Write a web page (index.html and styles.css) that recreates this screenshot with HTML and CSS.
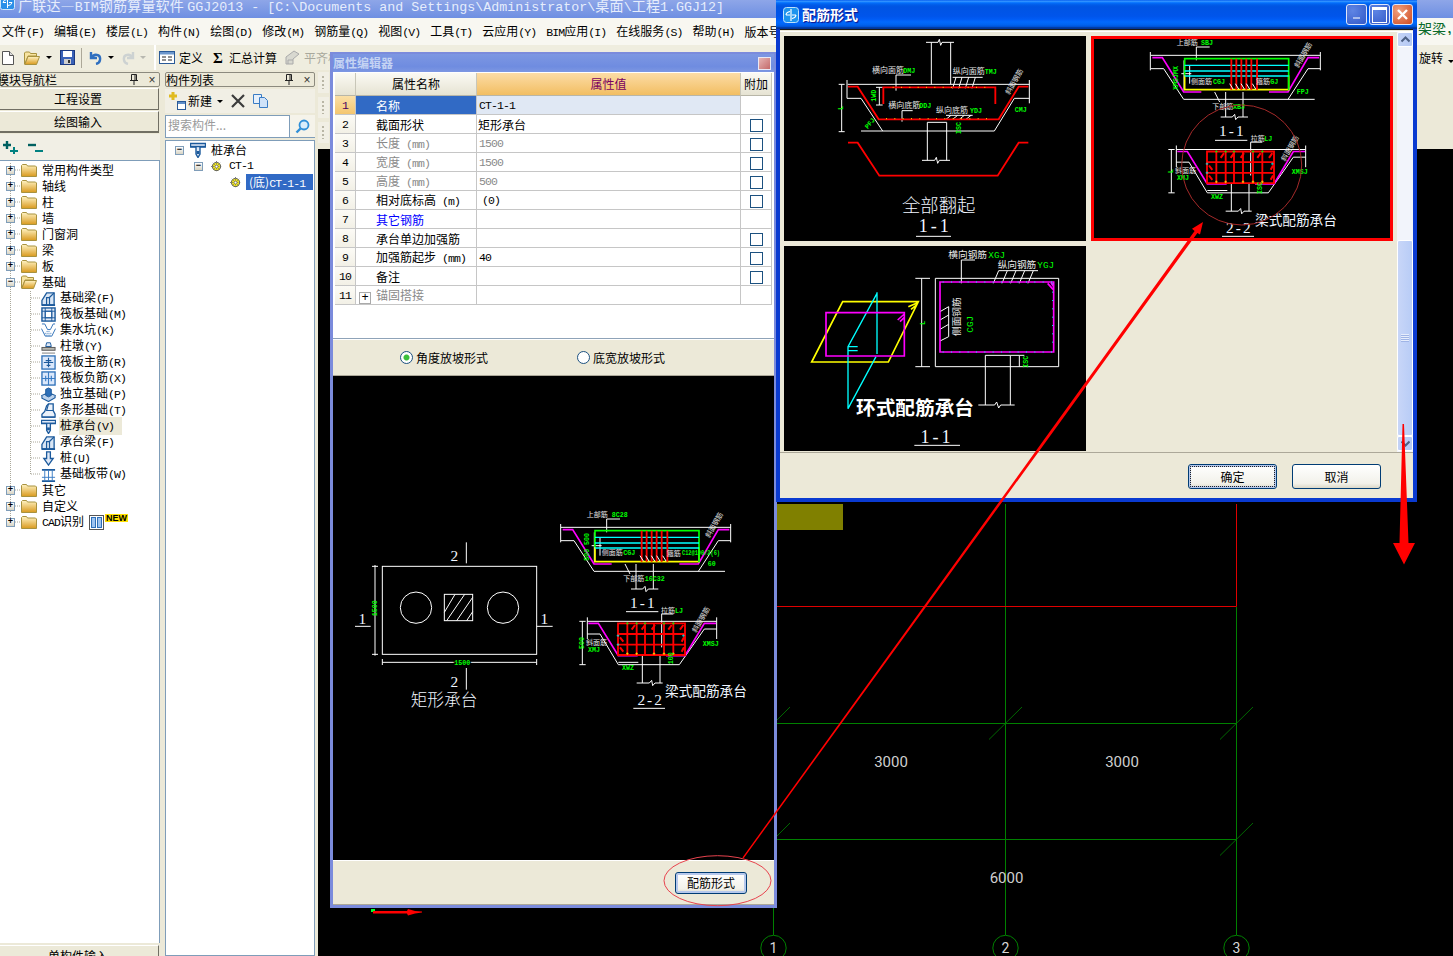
FILE: index.html
```html
<!DOCTYPE html>
<html lang="zh-CN">
<head>
<meta charset="utf-8">
<title>广联达 BIM 钢筋算量软件</title>
<link rel="stylesheet" href="styles.css">
</head>
<body>
<svg class="defs" width="0" height="0" aria-hidden="true">
  <defs>
    <linearGradient id="fold" x1="0" y1="0" x2="0" y2="1"><stop offset="0" stop-color="#fff3c4"/><stop offset="1" stop-color="#d99a1e"/></linearGradient>
    <symbol id="i-folder" viewBox="0 0 16 14"><path d="M.5 13.5V2.5l1-1h4l1 1.5h8l1 1v9.5z" fill="url(#fold)" stroke="#a8923f"/></symbol>
    <symbol id="i-open" viewBox="0 0 16 14"><path d="M.5 13V2l1-1h4l1 1.5h6V5H4L.8 13z" fill="#f7e3a0" stroke="#a8923f"/><path d="M.8 13.5 4 5.5h11.5L12.5 13.5z" fill="url(#fold)" stroke="#a8923f"/></symbol>
    <symbol id="i-beam" viewBox="0 0 16 16"><path d="M1 15V10L6 2h8v13z" fill="#d9e6f5" stroke="#1c5a9c" stroke-width="1.4"/><path d="M6 15V7h3v8M9 7l5-5" fill="#fff" stroke="#1c5a9c" stroke-width="1.4"/><path d="M1 15h14" stroke="#1c5a9c" stroke-width="2"/></symbol>
    <symbol id="i-raft" viewBox="0 0 16 16"><rect x="1" y="1" width="14" height="14" fill="#dfe9f7" stroke="#1c5a9c" stroke-width="1.5"/><rect x="4.500" y="4.500" width="7" height="7" fill="#fff" stroke="#1c5a9c"/><path d="M1 4.500h14M1 11.500h14M4.500 1v14M11.500 1v14" stroke="#1c5a9c"/></symbol>
    <symbol id="i-pit" viewBox="0 0 16 16"><path d="M1 1h3l3 6h3l3-6h2M.5 6l4 8h7l4-8" fill="#fff" stroke="#2d6fb8"/><path d="M4 11h8M5 13h6M6 9h4" stroke="#2d6fb8" stroke-dasharray="1 1"/></symbol>
    <symbol id="i-pier" viewBox="0 0 16 16"><path d="M6 4h4l1 4H5z" fill="#dfe9f7" stroke="#1c5a9c"/><rect x="1" y="9" width="14" height="3" fill="#b8b8b0" stroke="#555"/><path d="M1 15h14" stroke="#777"/></symbol>
    <symbol id="i-main" viewBox="0 0 16 16"><rect x="1" y="1" width="14" height="14" fill="#dbe8fb" stroke="#2d6fb8" stroke-width="1.4"/><path d="M8 3v10M3 8h10M5 6h6M6 11h4" stroke="#1c5a9c" stroke-width="1.200"/></symbol>
    <symbol id="i-neg" viewBox="0 0 16 16"><rect x="1" y="1" width="14" height="14" fill="#dbe8fb" stroke="#2d6fb8" stroke-width="1.4"/><path d="M8 1v14M1 8h14M5 5v6M11 5v6" stroke="#3a7cc4" stroke-width="1.200"/></symbol>
    <symbol id="i-iso" viewBox="0 0 16 16"><path d="M1 9l7-3 7 3-7 4z" fill="#e8f0fa" stroke="#1c5a9c" stroke-width="1.200"/><path d="M1 9v3l7 3.500 7-4V9" fill="#bcd2ec" stroke="#1c5a9c" stroke-width="1.200"/><path d="M5 2.500 8 1l3 1.500V9L8 10.500 5 9z" fill="#2d6fb8" stroke="#1c5a9c"/></symbol>
    <symbol id="i-strip" viewBox="0 0 16 16"><path d="M1 15v-3l3-3 2-6 2-2h5v7l2 4v3z" fill="#eaf1fa" stroke="#1c5a9c" stroke-width="1.400"/><path d="M1 15h14M8 1 6 8h7" stroke="#1c5a9c" fill="none" stroke-width="1.200"/></symbol>
    <symbol id="i-cap" viewBox="0 0 16 16"><path d="M.5 1.500h15v3.500H10v7L8 15.500 6 12V5H.5z" fill="#dfe9f7" stroke="#1c5a9c" stroke-width="1.400"/><path d="M1 4.500h14" stroke="#1c5a9c" stroke-width="1.400"/><path d="M6.500 9h3v3h-3z" fill="#1c5a9c"/></symbol>
    <symbol id="i-pile" viewBox="0 0 16 16"><path d="M6 1h4v7h3l-5 7-5-7h3z" fill="#dfe9f7" stroke="#1c5a9c" stroke-width="1.400"/></symbol>
    <symbol id="i-band" viewBox="0 0 16 16"><path d="M1 3h14M1 15h14" stroke="#1c5a9c" stroke-width="2"/><path d="M4 3v12M8 3v12M12 3v12M1 11h14" stroke="#3a7cc4"/></symbol>
    <symbol id="i-gear" viewBox="0 0 12 12"><circle cx="6" cy="6" r="4.500" fill="#f4ea1c" stroke="#555"/><path d="M6 0v12M0 6h12M2 2l8 8M10 2l-8 8" stroke="#666" stroke-dasharray="1 1"/><circle cx="6" cy="6" r="1.500" fill="#fff" stroke="#555" stroke-width=".6"/></symbol>
    <symbol id="i-pin" viewBox="0 0 8 11"><path d="M1.500.500h5v6h-5zM0 6.500h8M4 7v4M5 1v5" fill="none" stroke="#222"/></symbol>

    <g id="sec11" fill="none">
      <path class="w" d="M663 85H1172M662 75V130M1172 75V130M663 125H702L762 217H1155M1075 217L1135 125H1172M888 195V270M940 195V270M873 270H908L915 262 918 278 925 270H955M763 100V190M755 140H785M780 115V170M855 195 870 225M800 60V100M800 60H840"/>
      <path class="m" d="M668 92H698L762 195H815M1018 195H1075L1135 92H1168"/>
      <path class="y" d="M765 145V188H1077V145"/>
      <path class="g" d="M765 145V95H1077V190"/>
      <path class="c" d="M765 115H1077M765 132H1077M765 147H1077"/>
      <path class="r" d="M905 95V188M920 95V188M935 95V188M950 95V188M965 95V188M982 95V188"/>
      <path class="w" d="M900 170 910 186M917 170 927 186M934 170 944 186M950 170 960 186M968 170 978 186"/>
    </g>
    <g id="sec22" fill="none">
      <path class="w" d="M742 367H1130M742 355V420M1130 355V420M742 405H780L835 497H1018L1093 390H1130M907 470V552M960 470V552M890 552H928L935 544 938 560 945 552H968M965 345V445M965 345H1000M727 367V497M718 367H737M718 497H737M835 490H895"/>
      <path class="m" d="M745 373H775L835 470H893M978 470H1035L1093 373H1128"/>
      <path class="r" d="M834 373H1035V468H834ZM862 373V468M890 373V468M915 373V468M942 373V468M972 373V468M1000 373V468M834 405H1035M834 437H1035"/>
      <path class="rb" d="M875 392 885 378M905 392 915 378M935 392 945 378M985 392 995 378M1020 392 1030 378M840 415 850 428M840 445 850 458M1025 428 1032 415M1025 458 1032 445"/>
      <path class="g1" d="M858 373H866M862 369V377M886 373H894M890 369V377M911 373H919M915 369V377M968 373H976M972 369V377M996 373H1004M1000 369V377"/>
      <path class="y1" d="M858 464H866M862 460V468M886 464H894M890 460V468M938 464H946M942 460V468M968 464H976M972 460V468M996 464H1004M1000 460V468"/>
      <path class="c1" d="M830 410H838M834 406V414M830 437H838M834 433V441M1026 410H1034M1030 406V414"/>
    </g>
    <symbol id="i-min" viewBox="0 0 10 10"><rect x="1" y="7" width="7" height="2" fill="#a9bced"/></symbol>
  </defs>
</svg>

<div class="app">
  <header class="app-title">
    <svg class="app-logo" width="15" height="15" viewBox="0 0 15 15"><rect x=".5" y=".5" width="14" height="14" rx="2" fill="#2a8fe8" stroke="#cfe6fb"/><path d="M7.500 2v11M3 7.500a4 4 0 0 1 4-3M12 7.500a4 4 0 0 1-4 3M3 7.500h3M9 7.500h3" stroke="#fff" fill="none"/></svg>
    <span class="app-name">广联达—<span class="tl">BIM</span>钢筋算量软件 <span class="tl">GGJ2013 - [C:\Documents and Settings\Administrator\</span>桌面<span class="tl">\</span>工程<span class="tl">1.GGJ12]</span></span>
  </header>

  <nav class="menubar">
    <span>文件<i class="l">(F)</i></span><span>编辑<i class="l">(E)</i></span><span>楼层<i class="l">(L)</i></span><span>构件<i class="l">(N)</i></span><span>绘图<i class="l">(D)</i></span><span>修改<i class="l">(M)</i></span><span>钢筋量<i class="l">(Q)</i></span><span>视图<i class="l">(V)</i></span><span>工具<i class="l">(T)</i></span><span>云应用<i class="l">(Y)</i></span><span><i class="l">BIM</i>应用<i class="l">(I)</i></span><span>在线服务<i class="l">(S)</i></span><span>帮助<i class="l">(H)</i></span><span>版本号</span>
    <span class="menu-tail">架梁，</span>
  </nav>

  <div class="toolbar">
    <svg class="tb-a" width="12" height="14" viewBox="0 0 12 14"><path d="M.5.500h7l4 4v9H.500z" fill="#fff" stroke="#555"/><path d="M7.500.500v4h4" fill="#ddd" stroke="#555"/></svg>
    <svg class="tb-b" width="18" height="14" viewBox="0 0 16 14"><use href="#i-open"/></svg>
    <span class="caret"></span>
    <svg class="tb-c" width="15" height="15" viewBox="0 0 15 15"><rect x=".5" y=".5" width="14" height="14" fill="#3a62b8" stroke="#1d3a80"/><rect x="3" y="1" width="9" height="6" fill="#fff"/><rect x="4" y="9" width="7" height="5" fill="#cfcfcf"/><rect x="8" y="10" width="2" height="3" fill="#333"/></svg>
    <span class="tb-sep"></span>
    <svg class="tb-d" width="15" height="14" viewBox="0 0 15 14"><path d="M3 1v6h6M3 7c3-5 10-4 9 2-.3 2-2 3.500-4 4" fill="none" stroke="#2f6fc0" stroke-width="2.400"/></svg>
    <span class="caret"></span>
    <svg class="tb-e" width="13" height="14" viewBox="0 0 13 14"><path d="M11 1v6H5M11 7C8 2 1 3 2 9c.3 2 2 3.500 4 4" fill="none" stroke="#cdd2d2" stroke-width="2.400"/></svg>
    <span class="caret caret-off"></span>
    <span class="tb-break"></span>
    <svg class="tb-f" width="16" height="13" viewBox="0 0 16 13"><rect x=".5" y=".5" width="15" height="12" fill="#fff" stroke="#2a5a98"/><rect x="1" y="1" width="14" height="2.500" fill="#6d97cc"/><path d="M3 6h4M3 9h4M9 6h4M9 9h4" stroke="#222"/></svg>
    <span class="tb-txt">定义</span>
    <span class="tb-sigma">Σ</span>
    <span class="tb-txt">汇总计算</span>
    <svg class="tb-g" width="15" height="15" viewBox="0 0 15 15"><path d="M1 14V7l8-6 5 3-6 5v5z" fill="#d8d8d0" stroke="#aaa"/><path d="M3 14V10h5" stroke="#aaa" fill="none"/></svg>
    <span class="tb-txt tb-off">平齐板</span>
    <span class="tb-tail">旋转<span class="caret"></span></span>
  </div>

  <main class="main">
    <aside class="nav">
      <div class="pane-title"><span class="pane-name pane-clip">模块导航栏</span><svg class="pin"><use href="#i-pin"/></svg><span class="x">×</span></div>
      <button class="nav-btn">工程设置</button>
      <button class="nav-btn nav-btn2">绘图输入</button>
      <div class="nav-tools">
        <svg width="17" height="15" viewBox="0 0 17 15"><path d="M5 1v8M1 5h8" stroke="#006060" stroke-width="2.400" fill="none"/><path d="M12 7v7M8 11h8" stroke="#008080" stroke-width="2" fill="none"/></svg>
        <svg width="17" height="15" viewBox="0 0 17 15"><path d="M1 5h8" stroke="#006060" stroke-width="2.400" fill="none"/><path d="M8 11h8" stroke="#008080" stroke-width="2" fill="none"/></svg>
      </div>
      <div class="tree nav-tree">
        <svg class="guides" width="60" height="380" viewBox="0 0 60 380"><path d="M10.500 2V366M30.500 130V313M15 9h6M15 25h6M15 41h6M15 57h6M15 73h6M15 89h6M15 105h6M15 121h6M15 329h6M15 345h6M15 361h6M31 137h9M31 153h9M31 169h9M31 185h9M31 201h9M31 217h9M31 233h9M31 249h9M31 265h9M31 281h9M31 297h9M31 313h9" stroke="#aaa89a" stroke-dasharray="1 1" fill="none"/></svg>
        <div class="row"><b class="exp">+</b><svg class="fd"><use href="#i-folder"/></svg><span>常用构件类型</span></div>
        <div class="row"><b class="exp">+</b><svg class="fd"><use href="#i-folder"/></svg><span>轴线</span></div>
        <div class="row"><b class="exp">+</b><svg class="fd"><use href="#i-folder"/></svg><span>柱</span></div>
        <div class="row"><b class="exp">+</b><svg class="fd"><use href="#i-folder"/></svg><span>墙</span></div>
        <div class="row"><b class="exp">+</b><svg class="fd"><use href="#i-folder"/></svg><span>门窗洞</span></div>
        <div class="row"><b class="exp">+</b><svg class="fd"><use href="#i-folder"/></svg><span>梁</span></div>
        <div class="row"><b class="exp">+</b><svg class="fd"><use href="#i-folder"/></svg><span>板</span></div>
        <div class="row"><b class="exp">−</b><svg class="fd"><use href="#i-open"/></svg><span>基础</span></div>
        <div class="row kid"><svg class="ic"><use href="#i-beam"/></svg><span>基础梁<i class="l">(F)</i></span></div>
        <div class="row kid"><svg class="ic"><use href="#i-raft"/></svg><span>筏板基础<i class="l">(M)</i></span></div>
        <div class="row kid"><svg class="ic"><use href="#i-pit"/></svg><span>集水坑<i class="l">(K)</i></span></div>
        <div class="row kid"><svg class="ic"><use href="#i-pier"/></svg><span>柱墩<i class="l">(Y)</i></span></div>
        <div class="row kid"><svg class="ic"><use href="#i-main"/></svg><span>筏板主筋<i class="l">(R)</i></span></div>
        <div class="row kid"><svg class="ic"><use href="#i-neg"/></svg><span>筏板负筋<i class="l">(X)</i></span></div>
        <div class="row kid"><svg class="ic"><use href="#i-iso"/></svg><span>独立基础<i class="l">(P)</i></span></div>
        <div class="row kid"><svg class="ic"><use href="#i-strip"/></svg><span>条形基础<i class="l">(T)</i></span></div>
        <div class="row kid"><svg class="ic"><use href="#i-cap"/></svg><span class="hot">桩承台<i class="l">(V)</i></span></div>
        <div class="row kid"><svg class="ic"><use href="#i-beam"/></svg><span>承台梁<i class="l">(F)</i></span></div>
        <div class="row kid"><svg class="ic"><use href="#i-pile"/></svg><span>桩<i class="l">(U)</i></span></div>
        <div class="row kid"><svg class="ic"><use href="#i-band"/></svg><span>基础板带<i class="l">(W)</i></span></div>
        <div class="row"><b class="exp">+</b><svg class="fd"><use href="#i-folder"/></svg><span>其它</span></div>
        <div class="row"><b class="exp">+</b><svg class="fd"><use href="#i-folder"/></svg><span>自定义</span></div>
        <div class="row"><b class="exp">+</b><svg class="fd"><use href="#i-folder"/></svg><span><i class="l">CAD</i>识别</span>
          <svg class="cad-ic" width="15" height="15" viewBox="0 0 15 15"><rect x=".5" y=".5" width="14" height="14" fill="#fff" stroke="#555"/><rect x="2.500" y="2.500" width="4" height="10" fill="#9dc3f0" stroke="#2d6fb8"/><rect x="8.500" y="2.500" width="4" height="10" fill="#9dc3f0" stroke="#2d6fb8"/></svg>
          <em class="new">NEW</em></div>
      </div>
      <button class="nav-btn nav-single">单构件输入</button>
    </aside>

    <section class="list">
      <div class="pane-title"><span class="pane-name">构件列表</span><svg class="pin"><use href="#i-pin"/></svg><span class="x">×</span></div>
      <div class="list-tools">
        <svg width="17" height="18" viewBox="0 0 17 18"><path d="M4 0v8M0 4h8" stroke="#e0bb20" stroke-width="3"/><rect x="8.500" y="9.500" width="8" height="8" fill="#fff" stroke="#2a5a98"/><rect x="9" y="10" width="7" height="2" fill="#5f8ec8"/></svg>
        <span class="lt-new">新建</span><span class="caret"></span>
        <svg class="lt-del" width="14" height="14" viewBox="0 0 14 14"><path d="M1 1l12 12M13 1 1 13" stroke="#3c3c3c" stroke-width="2.200"/></svg>
        <svg class="lt-copy" width="16" height="14" viewBox="0 0 16 14"><path d="M.5.500h8v9h-8z" fill="#e6f0fb" stroke="#3a7cc4"/><path d="M6.500 3.500h5l3 3v7h-8z" fill="#cfe2f8" stroke="#3a7cc4"/></svg>
      </div>
      <div class="search"><span class="search-box">搜索构件...</span><span class="search-btn"><svg width="15" height="15" viewBox="0 0 15 15"><circle cx="9" cy="6" r="4.500" fill="#d8edfb" stroke="#2f8fd8" stroke-width="1.800"/><path d="M5.500 9.500 1.500 13.500" stroke="#2f8fd8" stroke-width="2.400"/></svg></span></div>
      <div class="tree list-tree">
        <div class="row r0"><b class="exp">−</b><svg class="ic cap"><use href="#i-cap"/></svg><span>桩承台</span></div>
        <div class="row r1"><b class="exp">−</b><svg class="gear"><use href="#i-gear"/></svg><span class="mono">CT-1</span></div>
        <div class="row r2"><svg class="gear"><use href="#i-gear"/></svg><span class="sel">(底)<i class="l">CT-1-1</i></span></div>
      </div>
    </section>

    <section class="work">
      <div class="grips"><span></span><span></span><span></span></div>
      <div class="cad">
        <svg width="1135" height="807" viewBox="318 149 1135 807">
          <rect class="olive" x="777" y="504" width="66" height="26"/>
          <path class="gl" d="M777 723.500H1236M777 839.500H1236M1005.500 504V935M1236.500 607V935M773.500 908V935"/>
          <path class="rl" d="M777 606.500H1236.500V504"/>
          <path class="tick" d="M989 739.500 1022 707M1220 739.500 1253 707M1220 855.500 1253 823M777 720 790 707M777 836 790 823"/>
          <circle class="ax" cx="773.500" cy="948" r="12.700"/><circle class="ax" cx="1005.500" cy="948" r="12.700"/><circle class="ax" cx="1236.500" cy="948" r="12.700"/>
          <text class="dim" x="891" y="767">3000</text><text class="dim" x="1122" y="767">3000</text><text class="dim" x="1006.500" y="883">6000</text>
          <text class="axn" x="773.500" y="953">1</text><text class="axn" x="1005.500" y="953">2</text><text class="axn" x="1236.500" y="953">3</text>
          <rect x="371" y="909" width="4" height="3" fill="#00ff30"/>
          <path d="M373 911h34l1-2 7 2 7 .5v1l-7 1-7 2-1-2h-34z" fill="#ff0000"/>
        </svg>
      </div>
    </section>
  </main>
</div>

<section class="prop">
  <header class="prop-title"><span>属性编辑器</span><span class="prop-close"></span></header>
  <div class="grid-wrap">
    <table class="pg">
      <colgroup><col class="c-n"><col class="c-a"><col class="c-v"><col class="c-x"></colgroup>
      <thead><tr><th></th><th>属性名称</th><th class="gold">属性值</th><th>附加</th></tr></thead>
      <tbody>
        <tr class="cur"><td>1</td><td class="nm">名称</td><td class="val">CT-1-1</td><td></td></tr>
        <tr><td>2</td><td class="nm">截面形状</td><td class="cjk">矩形承台</td><td><b class="cb"></b></td></tr>
        <tr class="dis"><td>3</td><td class="nm">长度<i class="l"> (mm)</i></td><td class="val">1500</td><td><b class="cb"></b></td></tr>
        <tr class="dis"><td>4</td><td class="nm">宽度<i class="l"> (mm)</i></td><td class="val">1500</td><td><b class="cb"></b></td></tr>
        <tr class="dis"><td>5</td><td class="nm">高度<i class="l"> (mm)</i></td><td class="val">500</td><td><b class="cb"></b></td></tr>
        <tr><td>6</td><td class="nm">相对底标高<i class="l"> (m)</i></td><td class="val ind">(0)</td><td><b class="cb"></b></td></tr>
        <tr><td>7</td><td class="nm link">其它钢筋</td><td></td><td></td></tr>
        <tr><td>8</td><td class="nm">承台单边加强筋</td><td></td><td><b class="cb"></b></td></tr>
        <tr><td>9</td><td class="nm">加强筋起步<i class="l"> (mm)</i></td><td class="val">40</td><td><b class="cb"></b></td></tr>
        <tr><td>10</td><td class="nm">备注</td><td></td><td><b class="cb"></b></td></tr>
        <tr class="dis"><td>11</td><td class="nm"><b class="pgx">+</b>锚固搭接</td><td></td><td></td></tr>
      </tbody>
    </table>
  </div>
  <div class="radios">
    <label class="rd"><b class="dot on"></b>角度放坡形式</label>
    <label class="rd"><b class="dot"></b>底宽放坡形式</label>
  </div>
  <div class="prop-view">
    <svg width="441" height="484" viewBox="-21 -369 1323 1452">
      <rect class="w" x="127" y="202" width="463" height="264"/>
      <circle class="w" cx="228" cy="326" r="47"/><circle class="w" cx="489" cy="326" r="47"/>
      <rect class="w" x="313" y="286" width="85" height="79"/>
      <path class="w" d="M313 340 345 286M320 365 374 286M350 365 398 295M380 365 398 338M379 130V193M379 507V572M45 382H92M590 382H638M105 198V470M96 202H114M96 466H114M127 490H590M127 480V498M590 480V498"/>
      <text class="gt" transform="translate(110 352) rotate(-90)">1500</text>
      <text class="gt gk" x="343" y="497">1500</text>
      <text class="big" x="346" y="186">2</text><text class="big" x="346" y="564">2</text>
      <text class="big" x="70" y="376">1</text><text class="big" x="616" y="376">1</text>
      <text class="cn50" x="312" y="620">矩形承台</text>
      <use href="#sec11"/>
      <text class="lb" x="740" y="53">上部筋</text><text class="gt" x="815" y="54">8C28</text>
      <text class="lb" x="785" y="168">侧面筋</text><text class="gt" x="850" y="168">CGJ</text>
      <text class="lb" x="980" y="170">箍筋</text><text class="gt" x="1026" y="169" textLength="114" lengthAdjust="spacingAndGlyphs">C12@100/2(6)</text>
      <text class="lb" x="850" y="245">下部筋</text><text class="gt" x="914" y="245">16C32</text>
      <text class="gt" transform="translate(747 138) rotate(-90)">500</text><text class="gt" transform="translate(747 185) rotate(-90)">500</text>
      <text class="gt" x="1103" y="201">60</text>
      <text class="lb" transform="translate(1108 118) rotate(-60)">斜面钢筋</text>
      <text class="big" x="910" y="328">1-1</text>
      <path class="w" d="M858 338H955"/>
      <use href="#sec22"/>
      <text class="lb" x="963" y="342">拉筋</text><text class="gt" x="1005" y="342">LJ</text>
      <text class="lb" x="738" y="438">斜面筋</text><text class="gt" x="744" y="458">XMJ</text>
      <text class="gt" x="1088" y="440">XMSJ</text><text class="gt" x="846" y="514">XWZ</text>
      <text class="gt" transform="translate(731 450) rotate(-90)">500</text><text class="gt" transform="translate(998 496) rotate(-90)">100</text>
      <text class="lb" transform="translate(1068 402) rotate(-60)">斜面钢筋</text>
      <text class="big" x="932" y="619">2-2</text>
      <path class="w" d="M880 628H975"/>
      <text class="cn41" x="975" y="592">梁式配筋承台</text>
    </svg>
  </div>
  <footer class="prop-foot"><button class="xp def">配筋形式</button></footer>
</section>

<section class="cfg">
  <header class="cfg-title">
    <svg width="16" height="16" viewBox="0 0 16 16"><rect x=".5" y=".5" width="15" height="15" rx="3" fill="#1d94ee" stroke="#bfe2fb"/><path d="M8 2v12M3 8a5 4 0 0 1 4-3.500M13 8a5 4 0 0 1-4 3.500M3 8h4M9 8h4" stroke="#fff" fill="none" stroke-width="1.200"/></svg>
    <span class="cfg-name">配筋形式</span>
    <span class="wb"><svg width="10" height="10"><use href="#i-min"/></svg></span>
    <span class="wb wb-max"></span>
    <span class="wb wb-close"><svg width="13" height="13" viewBox="0 0 13 13"><path d="M2 2l9 9M11 2l-9 9" stroke="#fff" stroke-width="2.400"/></svg></span>
  </header>
  <div class="cfg-body">
    <div class="cells">
      <div class="cell">
        <svg width="302" height="205" viewBox="24 108 906 615">
          <path class="w" d="M215 253H760M213 240V295M760 240V310M213 295H255L320 393M255 393H655L715 295H760M466 127V253M524 127V253M450 127H486L490 118 494 136 498 127H534M454 367V481M512 367V481M454 367H512M438 481H476L481 472 485 490 490 481H522M197 253V395M188 253H206M188 395H206M310 262V315M300 262H320M300 315H320M360 272V225H405M378 365V332H410M530 265 540 232M548 265 558 232M568 265 578 232M588 265 598 232M530 232H620M510 358 525 346M530 358 545 346M550 358 565 346M570 358 585 346M510 346H590"/>
          <path class="r" d="M216 260H245L308 358H668L728 260H757M322 312V262H658V312"/>
          <path class="r" d="M216 428H245L310 527H665L728 428H757"/>
          <path class="dots" d="M350 262H640M330 356H650"/>
          <text class="lb24" x="288" y="219">横向面筋</text><text class="gt" x="382" y="220">DMJ</text>
          <text class="lb24" x="530" y="222">纵向面筋</text><text class="gt" x="626" y="222">TMJ</text>
          <text class="lb24" x="337" y="325">横向底筋</text><text class="gt" x="430" y="324">DDJ</text>
          <text class="lb24" x="480" y="340">纵向底筋</text><text class="gt" x="582" y="340">YDJ</text>
          <text class="gt" x="716" y="335">CMJ</text>
          <text class="gt" transform="translate(300 305) rotate(-90)">1WD</text>
          <text class="gt" transform="translate(554 402) rotate(-90)">ISC</text>
          <text class="gt" transform="translate(202 330) rotate(-90)">L</text>
          <text class="gt" transform="translate(275 388) rotate(-50)">PFJ</text>
          <text class="lb" transform="translate(700 285) rotate(-60)">斜面钢筋</text>
          <text class="cn55" x="488" y="637">全部翻起</text>
          <text class="big2" x="478" y="696">1-1</text>
          <path class="w" d="M420 709H525"/>
        </svg>
      </div>
      <div class="cell sel-cell">
        <svg width="302" height="205" viewBox="18 108 906 615">
          <use href="#sec11" transform="translate(-466 81)"/>
          <text class="lb" x="275" y="135">上部筋</text><text class="gt" x="348" y="135">SBJ</text>
          <text class="lb" x="318" y="251">侧面筋</text><text class="gt" x="384" y="251">CGJ</text>
          <text class="lb" x="513" y="252">箍筋</text><text class="gt" x="556" y="252">GJ</text>
          <text class="lb" x="382" y="327">下部筋</text><text class="gt" x="444" y="327">XBJ</text>
          <text class="gt" x="635" y="282">FPJ</text>
          <text class="gt" transform="translate(279 270) rotate(-90)">XMSJMX</text>
          <text class="lb" transform="translate(640 205) rotate(-60)">斜面钢筋</text>
          <text class="big" x="442" y="408">1-1</text>
          <path class="w" d="M390 421H487"/>
          <use href="#sec22" transform="translate(-468 81.500)"/>
          <text class="lb" x="497" y="424">拉筋</text><text class="gt" x="538" y="424">LJ</text>
          <text class="lb" x="270" y="520">斜面筋</text><text class="gt" x="276" y="541">XMJ</text>
          <text class="gt" x="620" y="522">XMSJ</text><text class="gt" x="378" y="597">XWZ</text>
          <text class="gt" transform="translate(263 520) rotate(-90)">L</text>
          <text class="gt" transform="translate(530 582) rotate(-90)">ISC</text>
          <text class="lb" transform="translate(600 485) rotate(-60)">斜面钢筋</text>
          <text class="big" x="463" y="700">2-2</text>
          <path class="w" d="M411 709H507"/>
          <text class="cn41" x="510" y="674">梁式配筋承台</text>
        </svg>
      </div>
      <div class="cell">
        <svg width="302" height="205" viewBox="24 18 906 615">
          <path class="y" d="M107 366 200 185H427L337 366Z M397 200 425 188M405 208 422 195"/>
          <path class="c" d="M303 157V342M303 160 216 320V506L300 350M216 320H245M216 332H245"/>
          <path class="m m2" d="M150 218H385V348H150ZM365 240 385 222M372 245 385 232"/>
          <path class="w" d="M478 115H848V380H478ZM628 495V346H703V495M607 495H656L662 486 668 504 674 495H716M437 115V380M418 115H462M418 380H462M556 130V60H597M652 130 668 92M678 130 694 92M704 130 720 92M730 130 746 92M756 130 772 92M668 92H786M492 215 518 200M492 240 518 225M492 268 518 253M492 303 518 290M518 200V290M703 346H730V380M730 346H745"/>
          <path class="m m2" d="M492 126H833V336H492ZM815 130 831 148M825 128 833 140"/>
          <path class="dots2" d="M500 336H830M500 126H830M830 130V330"/>
          <text class="lb29" x="517" y="53">横向钢筋</text><text class="gt2" x="637" y="53">XGJ</text>
          <text class="lb29" x="665" y="83">纵向钢筋</text><text class="gt2" x="784" y="83">YGJ</text>
          <text class="lb29" transform="translate(552 288) rotate(-90)">侧面钢筋</text>
          <text class="gt2" transform="translate(592 278) rotate(-90)">CGJ</text>
          <text class="gt" transform="translate(446 255) rotate(-90)">L</text>
          <text class="gt" transform="translate(757 383) rotate(-90)">ISC</text>
          <text class="cn59b" x="417" y="525">环式配筋承台</text>
          <text class="big2" x="483" y="610">1-1</text>
          <path class="w" d="M415 616H552"/>
        </svg>
      </div>
    </div>
    <div class="vscroll">
      <span class="sb-btn"><svg width="9" height="7" viewBox="0 0 9 7"><path d="M.5 5.500 4.500 1.500l4 4" stroke="#4d6185" stroke-width="2" fill="none"/></svg></span>
      <span class="sb-track"></span>
      <span class="sb-thumb"><i></i></span>
      <span class="sb-btn"><svg width="9" height="7" viewBox="0 0 9 7"><path d="M.5 1.500l4 4 4-4" stroke="#4d6185" stroke-width="2" fill="none"/></svg></span>
    </div>
  </div>
  <footer class="cfg-foot"><button class="xp focus">确定</button><button class="xp">取消</button></footer>
</section>

<svg class="notes" width="1453" height="956" viewBox="0 0 1453 956">
  <circle cx="1241.700" cy="165" r="60" fill="none" stroke="#a52a2a"/>
  <ellipse cx="717.500" cy="880.700" rx="53.500" ry="25" fill="none" stroke="#e8434e"/>
  <path d="M742.500 857.600 1194.600 231 1192 228.800 1203 222 1200 234.600 1197.400 232.900 743.500 858.400Z" fill="#ff0000"/>
  <path d="M1402.500 424H1404L1408.500 543H1415L1404 564.500 1393 543H1399.500Z" fill="#ff0000"/>
</svg>
</body>
</html>
```
FILE: styles.css
```css
* { box-sizing: border-box; }
html, body { margin: 0; padding: 0; }
body {
  width: 1453px; height: 956px; overflow: hidden; position: relative;
  background: #ece9d8; color: #000;
  font: 12px/14px "Noto Sans CJK SC", "Liberation Sans", sans-serif;
}
i, em, b { font-style: normal; font-weight: normal; }
.l, .mono { font: 11.5px/14px "Liberation Mono", monospace; letter-spacing: -.9px; }
.defs { position: absolute; }
button { font: inherit; color: inherit; padding: 0; }

.app { display: flex; flex-direction: column; height: 956px; }
.app-title {
  height: 18px; flex: none; overflow: hidden; display: flex; align-items: flex-start; gap: 3px;
  background: linear-gradient(#8ea6e8, #6e8fe2);
  color: #e6edfc;
}
.app-logo { margin-top: -5px; flex: none; }
.app-name { font-size: 14px; line-height: 10px; white-space: pre; letter-spacing: .2px; }
.tl { font: 13.33px/10px "Liberation Mono", monospace; letter-spacing: 0; }

.menubar {
  height: 27px; flex: none; padding: 0 0 0 2px; display: flex; gap: 10px; align-items: center;
  background: #f8f7f1; white-space: nowrap; overflow: hidden;
}
.menu-tail { margin-left: auto; color: #0a6a2a; font-size: 14px; margin-bottom: 8px; flex: none; width: 35px; overflow: hidden; }

.toolbar {
  height: 25px; flex: none; display: flex; align-items: center;
  background: #efeddf; white-space: nowrap; overflow: hidden;
}
.tb-a { margin-left: 2px; }
.tb-b { margin-left: 9px; }
.caret { display: inline-block; width: 0; height: 0; margin-left: 5px; border: 3px solid transparent; border-top: 3px solid #000; border-bottom: 0; }
.caret-off { border-top-color: #b8b8b0; }
.tb-c { margin-left: 8px; }
.tb-sep { width: 1px; height: 20px; margin-left: 6px; background: #aca899; }
.tb-d { margin-left: 6px; }
.tb-e { margin-left: 8px; }
.tb-break { width: 2px; height: 25px; margin-left: 8px; background: #fff; }
.tb-f { margin-left: 3px; }
.tb-txt { margin-left: 4px; }
.tb-sigma { margin-left: 10px; font: bold 15px/14px "Liberation Serif", serif; width: 10px; }
.tb-sigma + .tb-txt { margin-left: 6px; }
.tb-g { margin-left: 8px; }
.tb-off { color: #a8a89c; }
.tb-tail { margin-left: auto; margin-right: 0; width: 34px; }

.main { flex: 1; display: flex; min-height: 0; }
.nav { width: 160px; flex: none; display: flex; flex-direction: column; padding-top: 2px; }
.pane-title {
  height: 15px; flex: none; display: flex; align-items: center; gap: 0;
  border: 1px solid #8c8a7e; border-radius: 2px; background: #ece9d8; padding-right: 3px;
}
.pane-name { flex: 1; margin-left: 0; }
.pane-clip { margin-left: -4px; }
.pin { width: 8px; height: 11px; margin-right: 10px; flex: none; }
.x { width: 8px; font: 12px/12px "Liberation Sans", sans-serif; color: #333; text-align: center; }
.nav-btn {
  height: 22px; flex: none; margin: 1px 0 0 -3px; width: 162px; text-align: center; background: #ece9d8;
  border: 1px solid #aca899; border-right-color: #716f64; border-bottom-color: #716f64; border-top-color: #fff;
}
.nav-btn2 { border-bottom-width: 2px; }
.nav-tools { height: 26px; flex: none; display: flex; align-items: center; gap: 8px; padding-left: 2px; margin-top: 1px; background: #f1efe5; }
.tree { background: #fff; position: relative; }
.nav-tree { flex: 1; min-height: 0; padding-top: 1px; border-top: 1px solid #7f9db9; border-right: 1px solid #7f9db9; }
.guides { position: absolute; left: 0; top: 0; }
.row { height: 16px; display: flex; align-items: center; white-space: nowrap; padding-left: 6px; position: relative; }
.exp {
  width: 9px; height: 9px; flex: none; border: 1px solid #7f9db9; background: linear-gradient(#fff, #d8d4c4);
  font: bold 9px/7px "Liberation Mono", monospace; text-align: center; color: #000;
}
.fd { width: 16px; height: 14px; margin-left: 6px; margin-right: 5px; flex: none; }
.kid { padding-left: 41px; }
.ic { width: 15px; height: 15px; margin-right: 4px; flex: none; }
.hot { background: #ece9d8; padding: 1px 8px 1px 1px; margin-left: -1px; }
.cad-ic { margin-left: 5px; }
.new { margin: -9px 0 0 1px; background: #ffe000; font: bold 9px/8px "Liberation Sans", sans-serif; padding: 0 1px; }
.nav-single { margin-top: 2px; margin-bottom: -11px; }

.list { width: 150px; flex: none; margin-left: 5px; display: flex; flex-direction: column; padding-top: 2px; }
.list-tools { height: 24px; flex: none; margin-top: 2px; display: flex; align-items: center; padding-left: 4px; background: #f1efe5; }
.lt-new { margin-left: 2px; }
.lt-del { margin-left: 8px; }
.lt-copy { margin-left: 8px; }
.search { height: 24px; flex: none; margin-top: 2px; display: flex; background: #ece9d8; padding-bottom: 1px; }
.search-box { width: 125px; padding: 2px 0 0 2px; background: #fff; border: 1px solid #7f9db9; color: #9a9a9a; white-space: nowrap; }
.search-btn { flex: 1; display: flex; align-items: center; justify-content: center; background: #f5f3ea; border-bottom: 1px solid #7f9db9; }
.list-tree { flex: 1; margin-top: 1px; border: 1px solid #7f9db9; padding-top: 1px; }
.r0 { padding-left: 9px; }
.r0 .cap { margin-left: 6px; margin-right: 5px; width: 16px; height: 16px; }
.r1 { padding-left: 28px; }
.gear { width: 11px; height: 11px; margin-left: 8px; margin-right: 7px; flex: none; }
.r2 { padding-left: 56px; }
.r2 .gear { margin-left: 8px; margin-right: 5px; }
.sel { background: #316ac5; color: #fff; width: 67px; height: 16px; padding: 1px 0 0 3px; white-space: nowrap; overflow: hidden; }

.work { width: 1135px; flex: none; margin-left: 3px; display: flex; flex-direction: column; }
.grips { height: 79px; flex: none; padding: 2px 0 0 0; display: flex; flex-direction: column; gap: 4px; }
.grips span { width: 11px; height: 21px; background: repeating-linear-gradient(#b9b6a6 0 2px, transparent 2px 4px) 4px 4px / 2px 13px no-repeat, #f1efe5; }
.cad { flex: 1; background: #000; overflow: hidden; }
.cad svg { display: block; }
.olive { fill: #808000; }
.gl { stroke: #008000; fill: none; }
.rl { stroke: #e00000; fill: none; }
.tick { stroke: #008000; stroke-width: .8; fill: none; }
.ax { stroke: #008000; fill: #000; }
.dim { fill: #cfcfcf; font: 15px "Roboto", sans-serif; text-anchor: middle; }
.axn { fill: #d8d8d8; font: 14px "Roboto", sans-serif; text-anchor: middle; }

.prop {
  position: absolute; left: 330px; top: 52px; width: 447px; height: 856px;
  border: 3px solid #7b8bdc; border-top-width: 2px; display: flex; flex-direction: column; background: #ece9d8;
}
.prop-title {
  height: 18px; flex: none; display: flex; align-items: center; justify-content: space-between; padding: 0 3px 0 0;
  background: linear-gradient(#7d97e2, #6f8ce0 70%, #7d97e2); color: #c4d3f3; font-weight: bold;
}
.prop-close { width: 13px; height: 13px; background: linear-gradient(135deg, #e6b4b4, #c46a6a); border: 1px solid #e8e8f4; }
.grid-wrap { height: 267px; flex: none; background: #fff; padding: 1px 0 0 2px; border-bottom: 1px solid #8fa3b8; }
.pg { width: 437px; table-layout: fixed; border-collapse: separate; border-spacing: 0; }
.c-n { width: 21px; } .c-a { width: 121px; } .c-v { width: 264px; } .c-x { width: 31px; }
.pg th { height: 23px; padding: 0; font-weight: normal; background: linear-gradient(#fbfaf4, #e6e3d3); border-right: 1px solid #c8c6b8; border-bottom: 1px solid #b8b6a8; white-space: nowrap; }
.pg th.gold { background: linear-gradient(#fcdca6, #f2be62); color: #7a0060; }
.pg td { height: 19px; padding: 2px 0 0; border-right: 1px solid #c6c6c6; border-bottom: 1px solid #c6c6c6; white-space: nowrap; overflow: hidden; }
.pg td:first-child { text-align: center; font: 11.5px/14px "Liberation Mono", monospace; letter-spacing: -.9px; background: linear-gradient(#fcfbf6, #f2f0e6); }
.pg td:last-child { text-align: center; padding-top: 0; }
.nm { padding-left: 20px !important; }
.val { padding-left: 2px !important; font: 11.5px/14px "Liberation Mono", monospace; letter-spacing: -.9px; }
.cjk { padding-left: 1px !important; }
.ind { padding-left: 5px !important; }
.cur td:first-child { background: linear-gradient(#fbdfa6, #f4c670); color: #4a0060; }
.cur .nm { background: #316ac5; color: #fff; }
.cur .val { background: #e0e8f4; }
.dis .nm, .dis .val { color: #8a8a8a; }
.link { color: #0000ff; }
.cb { display: inline-block; width: 13px; height: 13px; margin-top: 3px; border: 1px solid #1c5180; background: #fff; vertical-align: top; }
.pgx { display: inline-block; width: 12px; height: 12px; margin: 0 5px 0 -17px; border: 1px solid #aaa; background: #fff; font: 12px/10px "Liberation Mono", monospace; color: #000; text-align: center; vertical-align: -1px; }

.radios { height: 37px; flex: none; display: flex; align-items: center; padding-left: 67px; background: #ece9d8; border-top: 1px solid #fff; border-bottom: 1px solid #aca899; }
.rd { width: 177px; display: flex; align-items: center; gap: 3px; }
.dot { width: 13px; height: 13px; border-radius: 50%; border: 1px solid #1c5180; background: #fff; position: relative; flex: none; }
.dot.on { background: radial-gradient(circle, #3cc03c 0 2.500px, #fff 3.500px); }

.prop-view { height: 484px; flex: none; background: #000; }
.prop-view svg { display: block; }
.prop-foot { flex: 1; display: flex; justify-content: flex-end; align-items: flex-start; padding: 11px 27px 0 0; background: #ece9d8; border-top: 1px solid #fff; border-bottom: 1px solid #aca899; }

.xp { border: 1px solid #003c74; border-radius: 3px; background: linear-gradient(#fff, #f2f1ea 80%, #dcd8c8); cursor: default; }
.xp.def { width: 72px; height: 22px; box-shadow: inset 0 0 0 2px #b6c8ec; }
.xp.focus { outline: 1px dotted #222; outline-offset: -3px; box-shadow: inset 0 0 0 2px #b6c8ec; }

.cfg {
  position: absolute; left: 776px; top: 0; width: 641px; height: 502px; display: flex; flex-direction: column;
  background: #ece9d8; border: 4px solid #0a3ad0; border-top: 0;
}
.cfg-title {
  height: 29px; flex: none; margin: 0 -4px; padding: 0 4px 0 7px; display: flex; align-items: center;
  background: linear-gradient(#0058ee, #3593ff 4%, #288eff 6%, #127dff 8%, #036ffc 10%, #0262ee 14%, #0057e5 20%, #0054e3 24%, #0055eb 56%, #005bf5 66%, #026afe 76%, #0062ef 86%, #0052d6 92%, #0040ab 94%, #003092);
}
.cfg-name { margin: 0 0 2px 3px; flex: 1; color: #fff; font-weight: bold; font-size: 14px; text-shadow: 1px 1px 1px #0f1089; }
.wb { width: 21px; height: 21px; margin-left: 2px; display: flex; align-items: center; justify-content: center; border: 1px solid #dfe6fa; border-radius: 3px; background: radial-gradient(circle at 30% 30%, #5f85e4, #3258c8); }
.wb svg { display: block; }
.wb-max::before { content: ""; width: 13px; height: 12px; border: 1px solid #fff; border-top-width: 3px; }
.wb-close { background: radial-gradient(circle at 30% 30%, #f0a080, #cf4a20); }
.cfg-body { height: 424px; flex: none; display: flex; border-top: 1px solid #1a1a1a; border-bottom: 1px solid #aca899; padding: 6px 0 0 4px; position: relative; }
.cfg-body::before { content: ""; position: absolute; left: 0; right: 0; top: 1px; height: 1px; background: #fff; }
.cells { display: grid; grid-template-columns: 302px 302px; grid-template-rows: 205px 205px; gap: 5px; }
.cell { background: #000; overflow: hidden; }
.cell svg { display: block; }
.sel-cell { outline: 3px solid #ff0000; outline-offset: -3px; }
.vscroll { width: 16px; margin: -4px 0 0 auto; display: flex; flex-direction: column; background: #f2f4fb; }
.sb-btn { height: 15px; flex: none; display: flex; align-items: center; justify-content: center; background: linear-gradient(90deg, #c4d3f6, #b4c8f4); border: 1px solid #fff; border-radius: 2px; }
.sb-track { height: 193px; flex: none; }
.sb-thumb { height: 196px; flex: none; display: flex; align-items: center; justify-content: center; background: linear-gradient(90deg, #c8d6f8, #b8ccf6); border: 1px solid #fff; border-radius: 2px; }
.sb-thumb i { width: 8px; height: 8px; background: repeating-linear-gradient(#e6edfc 0 1px, #9fb4e6 1px 2px); }
.cfg-foot { flex: 1; display: flex; justify-content: flex-end; gap: 15px; padding: 11px 32px 0 0; align-items: flex-start; }
.cfg-foot .xp { width: 89px; height: 25px; }

.notes { position: absolute; left: 0; top: 0; pointer-events: none; }

.w { stroke: #fff; stroke-width: 3; fill: none; }
.m { stroke: #ff00ff; stroke-width: 5; fill: none; }
.m2 { stroke-width: 5; }
.y { stroke: #ffff00; stroke-width: 5; fill: none; }
.g { stroke: #00ff00; stroke-width: 5; fill: none; }
.c { stroke: #00ffff; stroke-width: 4; fill: none; }
.r { stroke: #ff0000; stroke-width: 5.500; fill: none; }
.rb { stroke: #ff0000; stroke-width: 6; fill: none; }
.g1 { stroke: #00ff00; stroke-width: 2; fill: none; }
.y1 { stroke: #ffff00; stroke-width: 2; fill: none; }
.c1 { stroke: #00ffff; stroke-width: 2; fill: none; }
.dots { stroke: #ffe000; stroke-width: 3; stroke-dasharray: 3 22; fill: none; }
.dots2 { stroke: #00ffff; stroke-width: 3; stroke-dasharray: 3 22; fill: none; }
.gt { fill: #00ff00; font: bold 20px "Liberation Mono", monospace; }
.gk { paint-order: stroke; stroke: #000; stroke-width: 6px; }
.gt2 { fill: #00ff00; font: 28px "Liberation Mono", monospace; }
.lb { fill: #e6e6e6; font: 21px "Noto Sans CJK SC", sans-serif; }
.lb24 { fill: #e6e6e6; font: 24px "Noto Sans CJK SC", sans-serif; }
.lb29 { fill: #e6e6e6; font: 29px "Noto Sans CJK SC", sans-serif; }
.big { fill: #f0f6ff; font: 46px "Liberation Serif", serif; text-anchor: middle; letter-spacing: 6px; }
.big2 { fill: #f0f6ff; font: 54px "Liberation Serif", serif; text-anchor: middle; letter-spacing: 9px; }
.cn50 { fill: #f0f6ff; font: 300 50px "Noto Sans CJK SC", sans-serif; text-anchor: middle; }
.cn55 { fill: #f0f6ff; font: 300 55px "Noto Sans CJK SC", sans-serif; text-anchor: middle; }
.cn59b { fill: #fff; font: bold 59px "Noto Sans CJK SC", sans-serif; text-anchor: middle; }
.cn41 { fill: #f0f6ff; font: 41px "Noto Sans CJK SC", sans-serif; }
```
